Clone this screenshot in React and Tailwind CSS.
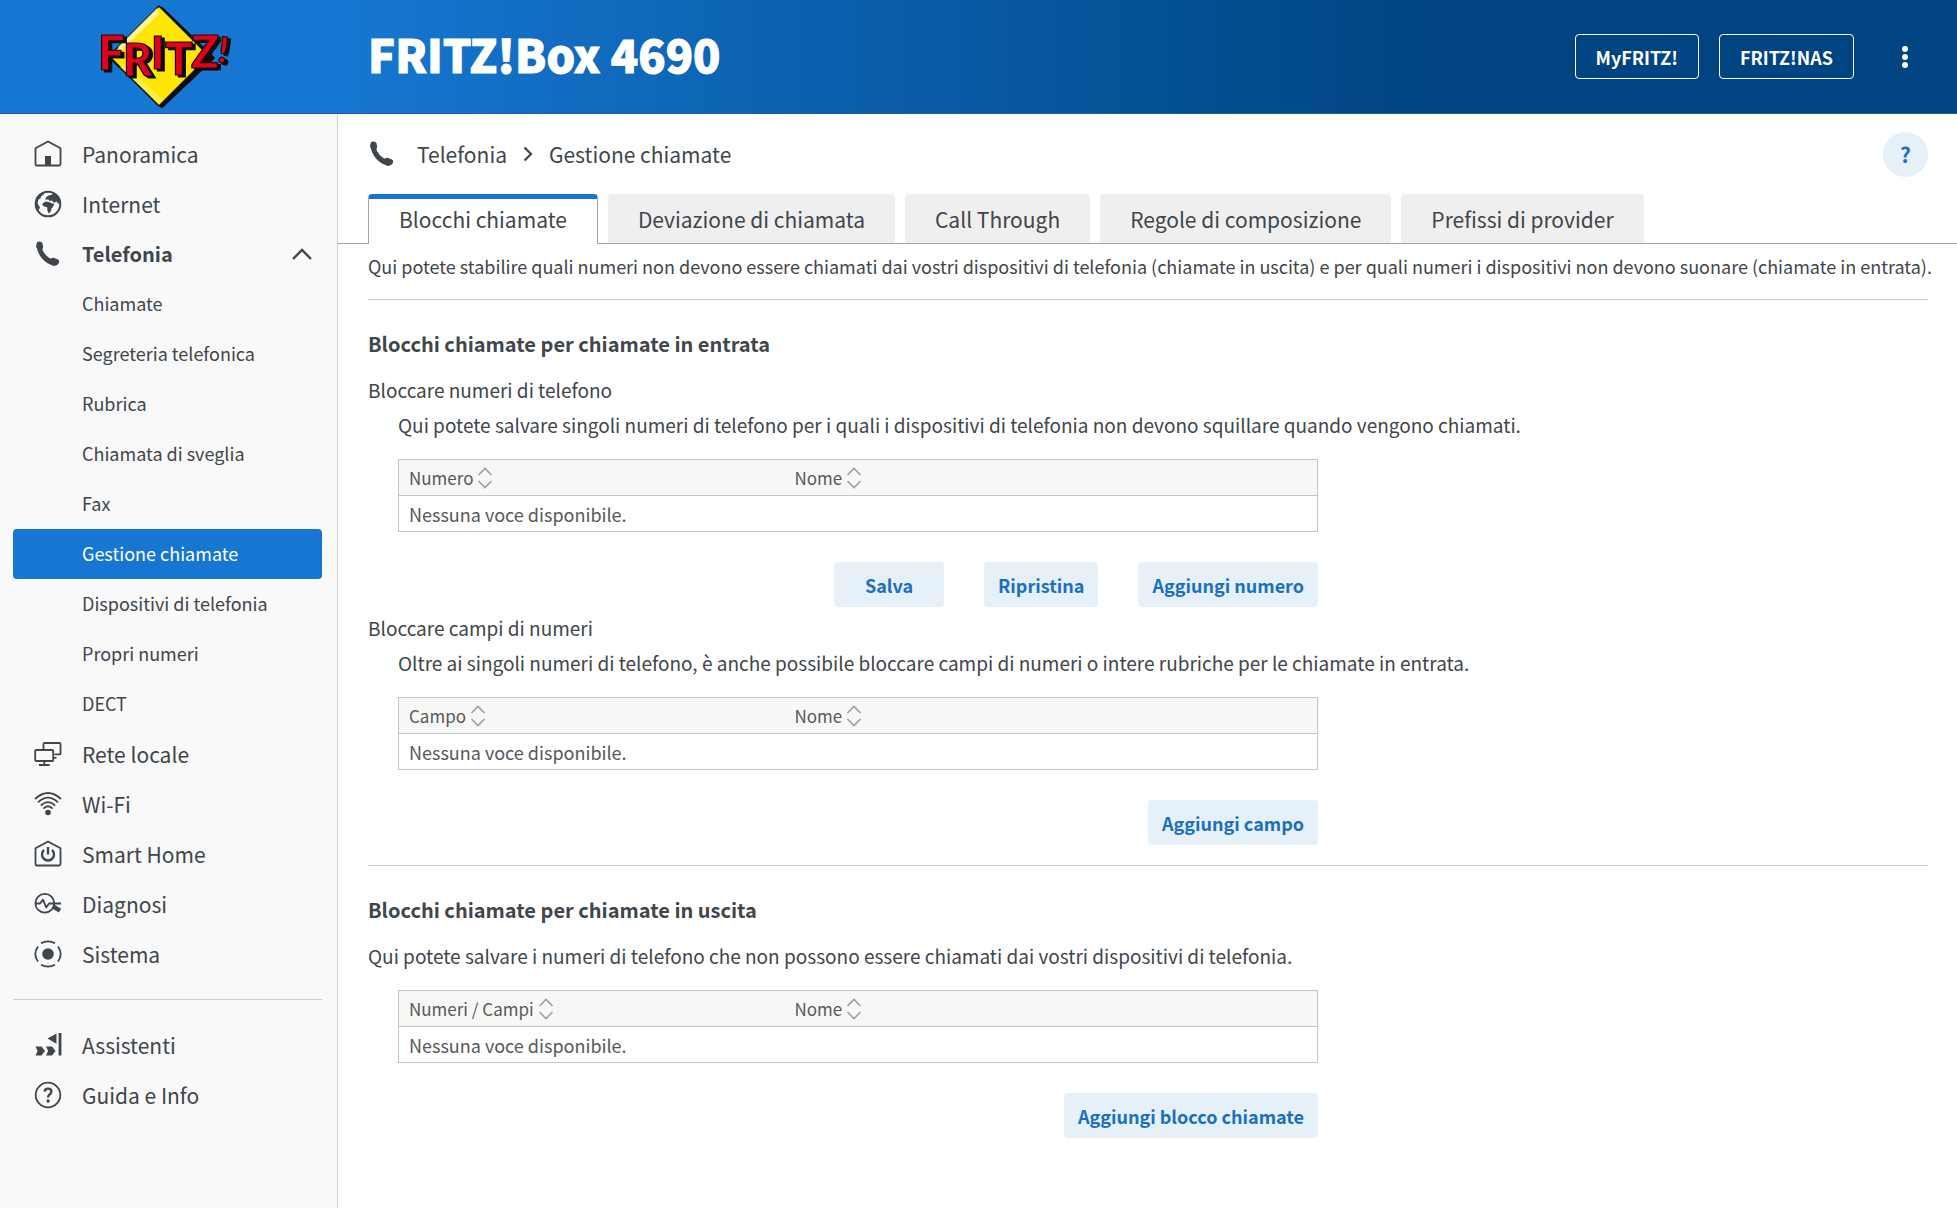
import React from 'react';

const FritzLogo = () => (
  <svg width="144" height="112" viewBox="0 0 144 112" role="img" aria-label="FRITZ!">
    <path d="M72 7 L124 57 L72 106 L20 57 Z" fill="#0b0b0b" stroke="#0b0b0b" strokeWidth="2" strokeLinejoin="round" />
    <path d="M69 5 L119 55 L69 105 L19 55 Z" fill="#ffe600" stroke="#111" strokeWidth="1.5" strokeLinejoin="round" />
    <path d="M67 7 L28 46 L31 50 L69 13 Z" fill="#fff8b8" opacity="0.8" />
    <path d="M30 66 L69 103 L73 99 L36 64 Z" fill="#fff27a" opacity="0.6" />
    <g
      fill="#e2001a"
      stroke="#1a0a0a"
      strokeWidth="1.2"
      fontFamily="Lato, sans-serif"
      fontWeight="900"
      className="drop-shadow-[3px_2px_0_#0b0b0b]"
    >
      <text x="8" y="69" fontSize="47">F</text>
      <text x="33" y="75" fontSize="45">R</text>
      <text x="61" y="68" fontSize="45">I</text>
      <text x="75" y="74" fontSize="46">T</text>
      <text x="101" y="67" fontSize="46">Z</text>
      <text x="128" y="62" fontSize="36" transform="rotate(8 134 50)">!</text>
    </g>
  </svg>
);

const Icon = ({ children }) => (
  <svg width="28" height="28" viewBox="0 0 28 28" fill="none" stroke="#3f464c" strokeWidth="1.8" strokeLinejoin="round" aria-hidden="true" className="shrink-0">
    {children}
  </svg>
);

const PhoneIcon = () => (
  <Icon>
    <path d="M5 6 C6 14 12 21 20 23" strokeWidth="5" strokeLinecap="round" />
    <path
      d="M3.6 1.8 Q7 0.6 8.4 3 L9.2 7 Q9 9 6.6 9.6 L2.6 8 Q1.6 3.4 3.6 1.8 Z M16 19.8 Q17.4 17.4 19.6 17.8 L24 19.4 Q26 20.6 24.6 23.4 Q22.6 26.4 18.4 25.4 Z"
      fill="#3f464c"
      stroke="none"
    />
  </Icon>
);

const icons = {
  home: (
    <Icon>
      <path d="M1.5 8.3 L14 1.5 L26.5 8.3 V24 Q26.5 25.5 25 25.5 H3 Q1.5 25.5 1.5 24 Z" />
      <path d="M11 16 H17 V25 H11 Z" fill="#3f464c" stroke="none" />
    </Icon>
  ),
  globe: (
    <Icon>
      <circle cx="14" cy="14" r="12.3" strokeWidth="2" />
      <g fill="#3f464c" stroke="none">
        <path d="M9 13 L12 11.4 L16 12.2 L18 13.6 L20.4 13.8 L19 17 L17.4 18.6 L16.8 21.5 L14.6 23.4 L13.4 20.4 L13.2 17.2 L10 16.6 L8.4 15 Z" />
        <path d="M11 9.6 L12.4 7 L14.6 5.6 L17.8 4.8 L19.6 2.6 L24 6.4 L26.4 12 L24.6 14 L22.6 11.6 L20 12.8 L17.6 10.6 L15.6 11 L14.4 9.4 Z" />
        <path d="M2.2 9 L6 4.6 L10.4 2.2 L9.4 4.8 L7 6.2 L6.6 8.4 L4.4 9.6 L3.6 13.4 L6 17.4 L4.6 20.4 L1.8 15 Z" />
      </g>
    </Icon>
  ),
  phone: <PhoneIcon />,
  network: (
    <Icon>
      <rect x="1.2" y="10" width="18" height="11" rx="1" />
      <path d="M9.5 9 V4 Q9.5 3 10.5 3 H25.5 Q26.5 3 26.5 4 V13.4 Q26.5 14.4 25.5 14.4 H20.5 M19.5 17.8 H22.5 M10.3 21 V24.5 M5 25 H15.6" />
    </Icon>
  ),
  wifi: (
    <Icon>
      <circle cx="14" cy="22.5" r="2.8" fill="#3f464c" stroke="none" />
      <path d="M1 9 Q14 -3 27 9 M4 12.4 Q14 2.8 24 12.4 M6.8 15.6 Q14 8.6 21.2 15.6 M9.4 18.6 Q14 14 18.6 18.6" />
    </Icon>
  ),
  smart: (
    <Icon>
      <path d="M1.5 8.3 L14 1.5 L26.5 8.3 V24 Q26.5 25.5 25 25.5 H3 Q1.5 25.5 1.5 24 Z" />
      <path d="M14 7 V14.5 M10 10 A6 6 0 1 0 18 10" strokeWidth="2.4" />
    </Icon>
  ),
  diagnosis: (
    <Icon>
      <circle cx="10.8" cy="13.3" r="9.4" />
      <path d="M1.5 13.5 H6 L9 9.6 L12.2 17.4 L15 13.5 H27" />
      <path d="M19 16.4 L26 20.6" strokeWidth="4.2" />
    </Icon>
  ),
  system: (
    <Icon>
      <circle cx="14" cy="14" r="5.8" fill="#3f464c" stroke="none" />
      <path d="M7 3.2 Q14 -0.6 21 3.2 M7 24.8 Q14 28.6 21 24.8 M4 6.4 Q-1.4 14 4 21.6 M24 6.4 Q29.4 14 24 21.6" />
    </Icon>
  ),
  wizard: (
    <Icon>
      <path d="M1.5 15.6 H7.5 L11 20 L7.5 24.5 H1.5 L3.6 20 Z M12 15.6 H18 L21.5 20 L18 24.5 H12 L14.1 20 Z M13.5 7.5 L22.5 2.6 V12.8 Z" fill="#3f464c" stroke="none" />
      <path d="M26 2 V24.5" strokeWidth="2.8" />
    </Icon>
  ),
  help: (
    <Icon>
      <circle cx="14" cy="14" r="12.3" />
      <path d="M10.6 10.6 Q10.8 7.6 14 7.6 Q17.4 7.6 17.4 10.6 Q17.4 12.2 15.6 13.4 Q14.1 14.4 14.1 16.6" strokeWidth="2.4" />
      <circle cx="14.1" cy="20" r="1.7" fill="#3f464c" stroke="none" />
    </Icon>
  ),
};

const mainItems = [
  { label: 'Panoramica', icon: 'home' },
  { label: 'Internet', icon: 'globe' },
  {
    label: 'Telefonia',
    icon: 'phone',
    children: [
      'Chiamate',
      'Segreteria telefonica',
      'Rubrica',
      'Chiamata di sveglia',
      'Fax',
      'Gestione chiamate',
      'Dispositivi di telefonia',
      'Propri numeri',
      'DECT',
    ],
  },
  { label: 'Rete locale', icon: 'network' },
  { label: 'Wi-Fi', icon: 'wifi' },
  { label: 'Smart Home', icon: 'smart' },
  { label: 'Diagnosi', icon: 'diagnosis' },
  { label: 'Sistema', icon: 'system' },
];

const footerItems = [
  { label: 'Assistenti', icon: 'wizard' },
  { label: 'Guida e Info', icon: 'help' },
];

const tabs = ['Blocchi chiamate', 'Deviazione di chiamata', 'Call Through', 'Regole di composizione', 'Prefissi di provider'];

const NavItem = ({ item }) => (
  <li>
    <a
      href="#"
      className={`flex h-[50px] items-center gap-5 pl-[21px] pr-[10px] ${item.children ? 'text-xl font-bold' : 'text-[21px]'}`}
    >
      {icons[item.icon]}
      <span className="flex-1">{item.label}</span>
      {item.children && (
        <svg width="20" height="12" viewBox="0 0 20 12" fill="none" stroke="#3f464c" strokeWidth="2.4" aria-hidden="true">
          <path d="M1 11 L10 2 L19 11" />
        </svg>
      )}
    </a>
    {item.children && (
      <ul>
        {item.children.map((child) => (
          <li key={child}>
            <a
              href="#"
              className={`flex h-[50px] items-center rounded pb-0.5 pl-[69px] ${
                child === 'Gestione chiamate' ? 'bg-[#1677d2] text-white' : ''
              }`}
            >
              {child}
            </a>
          </li>
        ))}
      </ul>
    )}
  </li>
);

const Sidebar = () => (
  <nav className="w-[338px] shrink-0 border-r border-[#d0d3d6] bg-[#f9f9f9] pt-[15px] pr-[15px] pl-[13px]">
    <ul>
      {mainItems.map((item) => (
        <NavItem key={item.label} item={item} />
      ))}
    </ul>
    <hr className="my-5 border-[#cfcfcf]" />
    <ul>
      {footerItems.map((item) => (
        <NavItem key={item.label} item={item} />
      ))}
    </ul>
  </nav>
);

const Header = () => (
  <header className="flex h-[114px] items-center border-b border-[#1d5f9f] bg-linear-to-r from-[#1677d2] from-17% to-[#004481] to-74%">
    <div className="flex w-[324px] shrink-0 justify-center">
      <FritzLogo />
    </div>
    <h1 className="flex-1 pb-1.5 pl-11 text-[45px] leading-[56px] font-black text-white [-webkit-text-stroke:1px_white]">
      FRITZ!Box 4690
    </h1>
    <div className="flex items-center gap-5 pr-[30px] font-bold text-white">
      <button type="button" className="h-[45px] rounded border border-white px-5">MyFRITZ!</button>
      <button type="button" className="h-[45px] rounded border border-white px-5">FRITZ!NAS</button>
      <button type="button" aria-label="Menu" className="ml-2 flex h-[45px] w-[45px] items-center justify-center">
        <svg width="6" height="24" viewBox="0 0 6 24" fill="#fff">
          <circle cx="3" cy="4" r="3" />
          <circle cx="3" cy="12" r="3" />
          <circle cx="3" cy="20" r="3" />
        </svg>
      </button>
    </div>
  </header>
);

const SortHeader = ({ label }) => (
  <th scope="col" className="h-9 px-[10px] py-0 text-left font-normal">
    <span className="flex items-center gap-1">
      {label}
      <svg width="16" height="22" viewBox="0 0 16 22" fill="none" stroke="#9f9f9f" strokeWidth="1.6" aria-hidden="true">
        <path d="M1.5 8 L8 1.5 L14.5 8 M1.5 14 L8 20.5 L14.5 14" />
      </svg>
    </span>
  </th>
);

const EmptyTable = ({ first }) => (
  <table className="mt-[22px] w-full table-fixed border-collapse border border-[#bcc7ce] text-[#55595c]">
    <colgroup>
      <col className="w-[42%]" />
      <col />
    </colgroup>
    <thead className="bg-[#f7f7f6] text-[17px]">
      <tr className="border-b border-[#bcc7ce]">
        <SortHeader label={first} />
        <SortHeader label="Nome" />
      </tr>
    </thead>
    <tbody>
      <tr>
        <td colSpan={2} className="h-9 px-[10px] py-0">Nessuna voce disponibile.</td>
      </tr>
    </tbody>
  </table>
);

const Button = ({ children }) => (
  <button type="button" className="h-[45px] min-w-[110px] rounded bg-[#e5f0f9] px-[14px] font-bold text-[#1a6fc0]">
    {children}
  </button>
);

const ListBlock = ({ first, buttons }) => (
  <div className="ml-[30px] max-w-[920px] text-lg leading-6">
    <EmptyTable first={first} />
    <div className="mt-[30px] flex justify-end gap-10">
      {buttons.map((b) => (
        <Button key={b}>{b}</Button>
      ))}
    </div>
  </div>
);

const App = () => {
  return (
    <div className="flex min-h-screen flex-col bg-white font-['Noto_Sans_CJK_SC','Noto_Sans',sans-serif] text-[18px] leading-6 text-[#3f464c]">
      <Header />
      <div className="flex flex-1">
        <Sidebar />
        <main className="min-w-0 flex-1">
          <div className="flex h-20 items-center pr-[29px] pl-[30px] text-[21px]">
            <PhoneIcon />
            <a href="#" className="ml-[21px]">Telefonia</a>
            <svg width="10" height="16" viewBox="0 0 10 16" fill="none" stroke="#3f464c" strokeWidth="2.2" aria-hidden="true" className="mx-4">
              <path d="M1.5 1.5 L8 8 L1.5 14.5" />
            </svg>
            <span className="flex-1">Gestione chiamate</span>
            <button type="button" aria-label="Guida" className="h-[45px] w-[45px] rounded-full bg-[#e5f0f9] font-bold text-[#1a6fc0]">
              ?
            </button>
          </div>

          <div role="tablist" className="flex h-[50px] gap-[10px] border-b border-[#a3a6a8] pl-[30px] text-[21px]">
            {tabs.map((tab, i) => (
              <button
                key={tab}
                type="button"
                role="tab"
                aria-selected={i === 0}
                className={
                  i === 0
                    ? '-mb-px rounded-t border-x border-t-[5px] border-x-[#a3a6a8] border-t-[#1677d2] bg-white px-[30px] pb-[6px]'
                    : 'rounded-t bg-[#efefef] px-[30px]'
                }
              >
                {tab}
              </button>
            ))}
          </div>

          <div className="pt-[10px] pr-[29px] pb-8 pl-[30px] text-[19px]">
            <p className="-mr-5 text-lg leading-6">
              Qui potete stabilire quali numeri non devono essere chiamati dai vostri dispositivi di telefonia (chiamate in uscita) e per
              quali numeri i dispositivi non devono suonare (chiamate in entrata).
            </p>
            <hr className="mt-[21px] border-[#c9cbcc]" />

            <h2 className="mt-[30px] text-xl leading-7 font-bold">Blocchi chiamate per chiamate in entrata</h2>
            <h3 className="mt-5">Bloccare numeri di telefono</h3>
            <p className="mt-[11px] ml-[30px]">
              Qui potete salvare singoli numeri di telefono per i quali i dispositivi di telefonia non devono squillare quando vengono
              chiamati.
            </p>
            <ListBlock first="Numero" buttons={['Salva', 'Ripristina', 'Aggiungi numero']} />

            <h3 className="mt-[9px]">Bloccare campi di numeri</h3>
            <p className="mt-[11px] ml-[30px]">
              Oltre ai singoli numeri di telefono, è anche possibile bloccare campi di numeri o intere rubriche per le chiamate in entrata.
            </p>
            <ListBlock first="Campo" buttons={['Aggiungi campo']} />
            <hr className="mt-5 border-[#c9cbcc]" />

            <h2 className="mt-[30px] text-xl leading-7 font-bold">Blocchi chiamate per chiamate in uscita</h2>
            <p className="mt-5">Qui potete salvare i numeri di telefono che non possono essere chiamati dai vostri dispositivi di telefonia.</p>
            <ListBlock first="Numeri / Campi" buttons={['Aggiungi blocco chiamate']} />
          </div>
        </main>
      </div>
    </div>
  );
};

export default App;
